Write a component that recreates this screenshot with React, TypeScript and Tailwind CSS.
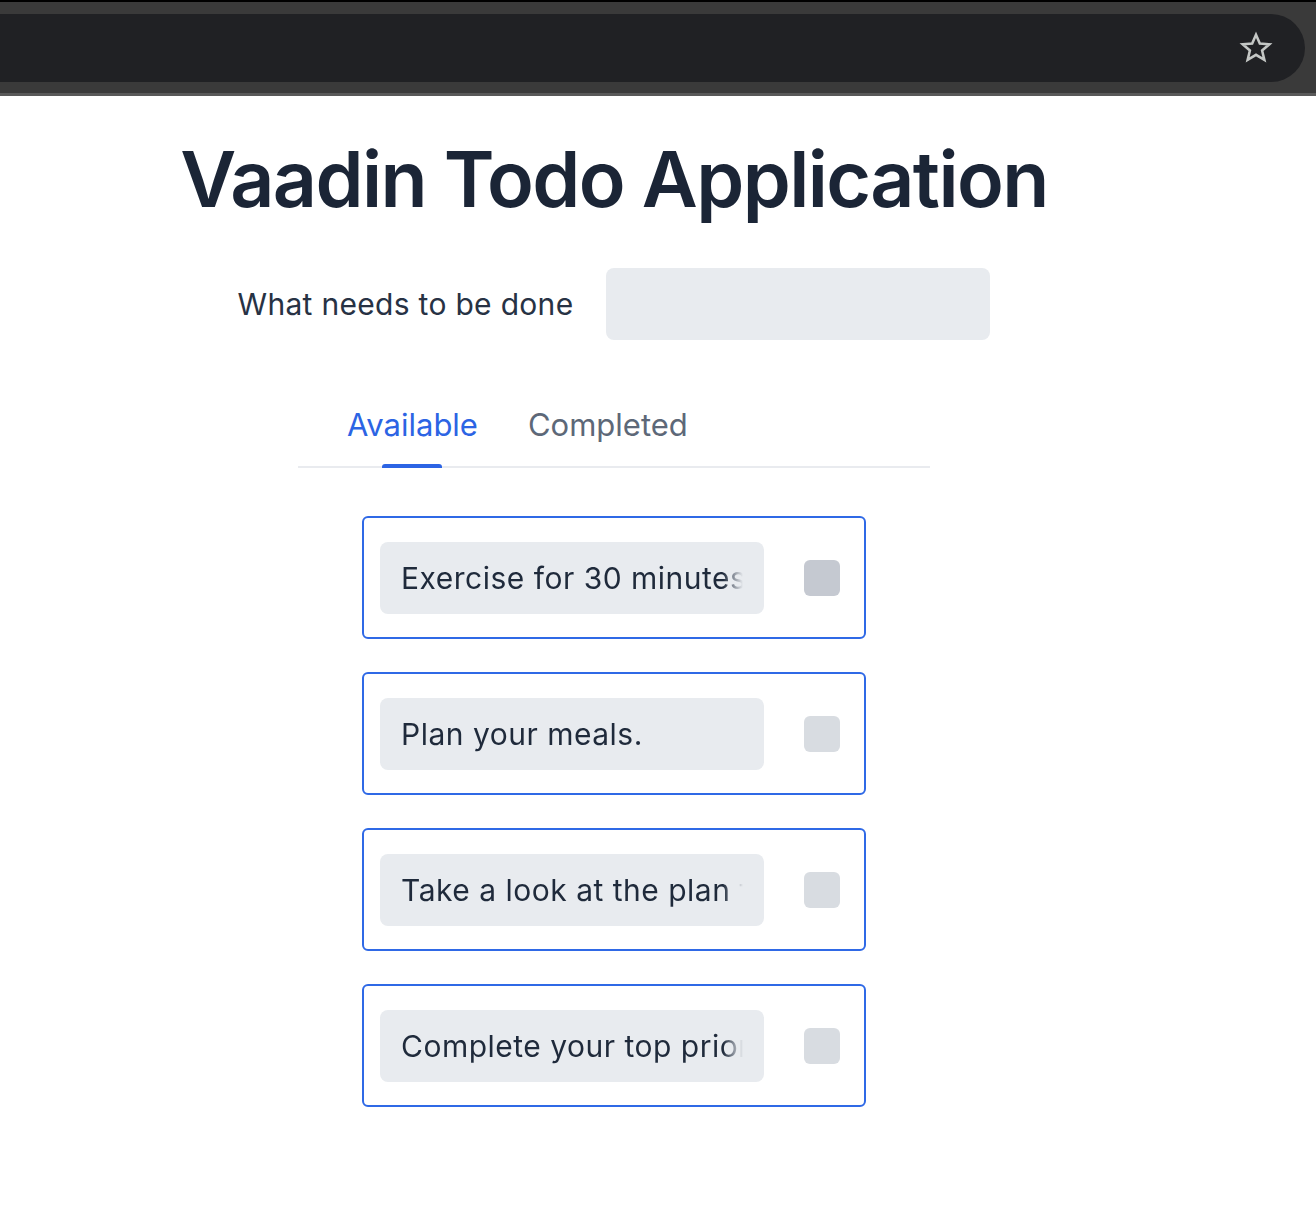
import React from "react";

const todos = [
  { text: "Exercise for 30 minutes every day.", hover: true },
  { text: "Plan your meals.", hover: false },
  { text: "Take a look at the plan for the week.", hover: false },
  { text: "Complete your top priority task first.", hover: false },
];

function Star() {
  return (
    <svg width="34" height="34" viewBox="0 0 24 24" fill="none" aria-hidden="true">
      <polygon
        points="12,2.6 14.7,8.9 21.4,9.4 16.3,13.8 17.9,20.4 12,16.8 6.1,20.4 7.7,13.8 2.6,9.4 9.3,8.9"
        stroke="#c4c7c5"
        strokeWidth="1.8"
        strokeLinejoin="miter"
      />
    </svg>
  );
}

export default function App() {
  return (
    <div className="min-h-[1206px] bg-white font-['Inter','Noto_Sans',sans-serif] text-[#1f2a3b]">
      {/* browser chrome strip */}
      <div className="border-t-2 border-black bg-[#3a3a3a] pt-[12px] pb-[11px] border-b-[3px] border-b-[#595959]">
        <div className="mr-[11px] flex h-[68px] items-center justify-end rounded-r-full bg-[#202124] pr-[32px]">
          <Star />
        </div>
      </div>

      <div className="flex w-[1228px] flex-col items-center">
        <h1 className="mt-[45px] text-[77px] font-semibold leading-none tracking-[-1.6px] text-[#1b2536]">
          Vaadin Todo Application
        </h1>

        <div className="mt-[50px] flex items-center gap-[33px]">
          <label className="text-[30px] leading-none tracking-[0.3px] text-[#273244]">What needs to be done</label>
          <div className="h-[72px] w-[384px] rounded-[8px] bg-[#e8ebef]" />
        </div>

        <div className="mt-[69px] flex w-[632px] border-b-2 border-[#e9ebef] pl-[24px]">
          <div className="relative px-[25px] pb-[26px] text-[31px] leading-none text-[#2c64e4]">
            Available
            <span className="absolute bottom-[-2px] left-1/2 h-[4px] w-[60px] -translate-x-1/2 rounded-t-[3px] bg-[#2c64e4]" />
          </div>
          <div className="px-[25px] pb-[26px] text-[31px] leading-none text-[#5d6878]">Completed</div>
        </div>

        <div className="mt-[48px] flex flex-col gap-[33px]">
          {todos.map((t) => (
            <div
              key={t.text}
              className="flex h-[123px] w-[504px] items-center rounded-[6px] border-2 border-[#2f69e6] pl-[16px]"
            >
              <div className="flex h-[72px] w-[384px] items-center rounded-[8px] bg-[#e8ebef] px-[21px]">
                <input
                  defaultValue={t.text}
                  readOnly
                  className="w-full bg-transparent text-[30px] leading-none tracking-[0.5px] text-[#1f2a3b] outline-none [mask-image:linear-gradient(to_left,transparent_0,black_1.25em)]"
                />
              </div>
              <div
                className={
                  "ml-[40px] h-[36px] w-[36px] rounded-[6px] " +
                  (t.hover ? "bg-[#c5c9d1]" : "bg-[#d8dce1]")
                }
              />
            </div>
          ))}
        </div>
      </div>
    </div>
  );
}
